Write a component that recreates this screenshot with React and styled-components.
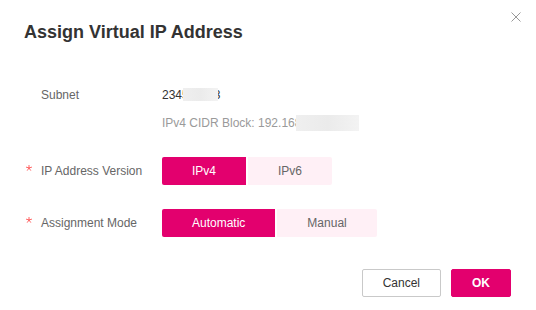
import { useState } from "react";
import styled, { createGlobalStyle } from "styled-components";

const PINK = "#e3006e";

const GlobalStyle = createGlobalStyle`
  html, body {
    margin: 0;
    padding: 0;
    background: #fff;
  }
  body {
    font-family: "Liberation Sans", Arial, sans-serif;
    font-size: 12px;
    color: #333;
  }
  * {
    box-sizing: border-box;
  }
`;

const Dialog = styled.div`
  position: relative;
  width: 536px;
  height: 310px;
  padding: 20px 25px 0 24px;
  background: #fff;
`;

const CloseButton = styled.button`
  position: absolute;
  top: 12px;
  right: 15px;
  width: 10px;
  height: 10px;
  padding: 0;
  border: none;
  background: none;
  cursor: pointer;
  display: flex;
`;

const Title = styled.h2`
  margin: 0;
  font-size: 18px;
  line-height: 24px;
  font-weight: bold;
  color: #333;
`;

const Form = styled.div`
  display: flex;
  flex-direction: column;
  margin-top: 41px;
`;

const Row = styled.div`
  display: flex;
  align-items: flex-start;
  margin-top: ${(p) => p.$gap || 0}px;
`;

const Label = styled.div`
  position: relative;
  flex-shrink: 0;
  width: 138px;
  padding-left: 17px;
  line-height: ${(p) => p.$height || 20}px;
  color: #666;
`;

const Star = styled.svg`
  position: absolute;
  left: 2px;
  top: calc(50% - 6px);
  width: 6px;
  height: 6px;
`;

const ValueColumn = styled.div`
  display: flex;
  flex-direction: column;
  gap: 8px;
`;

const Value = styled.div`
  line-height: 20px;
  color: ${(p) => (p.$muted ? "#9a9a9a" : "#333")};
  white-space: nowrap;
`;

const Redacted = styled.span`
  position: relative;
  display: inline-block;
  vertical-align: middle;
  width: ${(p) => p.$width}px;
  height: ${(p) => p.$height}px;
  margin: -2px ${(p) => p.$right || 0}px 0 ${(p) => p.$left || 0}px;
  background: linear-gradient(90deg, #efefef, #ebebeb 50%, #f3f3f3);
`;

const Segmented = styled.div`
  display: flex;
  gap: 2px;
`;

const Segment = styled.button`
  height: 28px;
  padding: 0 30px;
  border: none;
  font-family: inherit;
  font-size: 12px;
  cursor: pointer;
  background: ${(p) => (p.$active ? PINK : "#fff0f6")};
  color: ${(p) => (p.$active ? "#fff" : "#666")};
  &:first-child {
    border-radius: 2px 0 0 2px;
  }
  &:last-child {
    border-radius: 0 2px 2px 0;
  }
`;

const Footer = styled.div`
  display: flex;
  justify-content: flex-end;
  gap: 10px;
  margin-top: 32px;
`;

const Button = styled.button`
  height: 28px;
  padding: 0 20px;
  border-radius: 2px;
  font-family: inherit;
  font-size: 12px;
  cursor: pointer;
  border: 1px solid ${(p) => (p.$primary ? PINK : "#c9c9c9")};
  background: ${(p) => (p.$primary ? PINK : "#fff")};
  color: ${(p) => (p.$primary ? "#fff" : "#333")};
  font-weight: ${(p) => (p.$primary ? "bold" : "normal")};
`;

const RequiredStar = () => (
  <Star viewBox="0 0 6 6">
    <g stroke="#f66" strokeWidth="1" strokeLinecap="round">
      <line x1="3" y1="3" x2="3" y2="0.3" />
      <line x1="3" y1="3" x2="5.6" y2="2.2" />
      <line x1="3" y1="3" x2="4.6" y2="5.3" />
      <line x1="3" y1="3" x2="1.4" y2="5.3" />
      <line x1="3" y1="3" x2="0.4" y2="2.2" />
    </g>
  </Star>
);

const SegmentGroup = ({ options, value, onChange }) => (
  <Segmented>
    {options.map((o) => (
      <Segment key={o} $active={o === value} onClick={() => onChange(o)}>
        {o}
      </Segment>
    ))}
  </Segmented>
);

export default function App() {
  const [version, setVersion] = useState("IPv4");
  const [mode, setMode] = useState("Automatic");

  return (
    <>
      <GlobalStyle />
      <Dialog>
        <CloseButton aria-label="Close">
          <svg width="10" height="10" viewBox="0 0 10 10">
            <path d="M0.5 0.5L9.5 9.5M9.5 0.5L0.5 9.5" stroke="#999" strokeWidth="1" />
          </svg>
        </CloseButton>
        <Title>Assign Virtual IP Address</Title>

        <Form>
          <Row>
            <Label>Subnet</Label>
            <ValueColumn>
              <Value>
                2345
                <Redacted $width={35} $height={13} $left={-6} $right={-4} />3
              </Value>
              <Value $muted>
                IPv4 CIDR Block: 192.168
                <Redacted $width={63} $height={16} $left={-5} />
              </Value>
            </ValueColumn>
          </Row>

          <Row $gap={24}>
            <Label $height={28}>
              <RequiredStar />
              IP Address Version
            </Label>
            <SegmentGroup options={["IPv4", "IPv6"]} value={version} onChange={setVersion} />
          </Row>

          <Row $gap={24}>
            <Label $height={28}>
              <RequiredStar />
              Assignment Mode
            </Label>
            <SegmentGroup options={["Automatic", "Manual"]} value={mode} onChange={setMode} />
          </Row>
        </Form>

        <Footer>
          <Button>Cancel</Button>
          <Button $primary>OK</Button>
        </Footer>
      </Dialog>
    </>
  );
}
